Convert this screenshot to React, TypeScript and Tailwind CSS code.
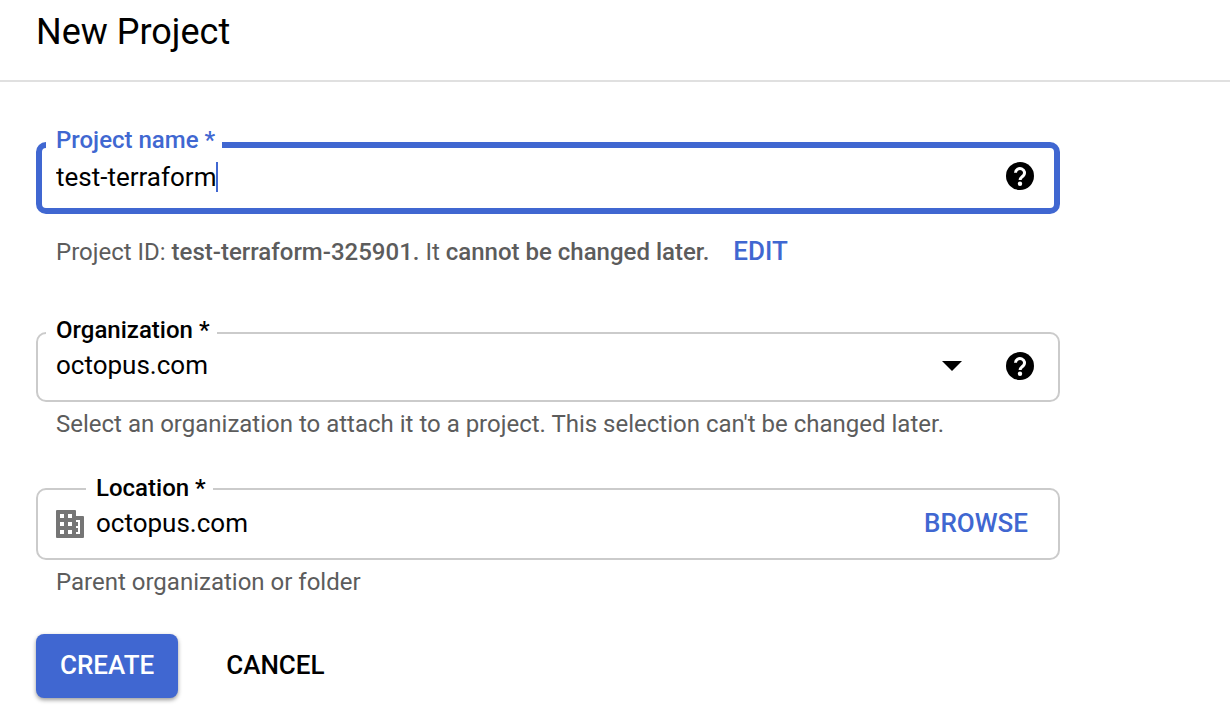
import type { ReactNode } from "react";

function HelpIcon() {
  return (
    <svg viewBox="0 0 28 28" className="size-7" aria-hidden="true">
      <circle cx="14" cy="14" r="14" fill="#000" />
      <path
        d="M9.5 10.8a4.5 4.3 0 1 1 7.7 3c-1.6 1.5-3.1 2.2-3.1 4.3"
        fill="none"
        stroke="#fff"
        strokeWidth="3"
      />
      <circle cx="14" cy="21.7" r="2.2" fill="#fff" />
    </svg>
  );
}

function HelpButton({ label }: { label: string }) {
  return (
    <button type="button" aria-label={label} className="shrink-0 pb-0.5">
      <HelpIcon />
    </button>
  );
}

function BuildingIcon() {
  return (
    <svg viewBox="0 0 28 28" className="size-7 shrink-0" fill="#757575" aria-hidden="true">
      <path
        fillRule="evenodd"
        d="M1 0h18a1 1 0 0 1 1 1v5h7a1 1 0 0 1 1 1v20a1 1 0 0 1-1 1H1a1 1 0 0 1-1-1V1a1 1 0 0 1 1-1zM4 4v4h4V4zM12 4v4h4V4zM4 12v4h4v-4zM12 12v4h4v-4zM4 20v4h4v-4zM12 20v4h4v-4zM20 10v2h2v4h-2v2h2v4h-2v2h4V10z"
      />
    </svg>
  );
}

function Field({
  id,
  label,
  hint,
  boxClass,
  labelClass,
  children,
}: {
  id: string;
  label: string;
  hint: ReactNode;
  boxClass: string;
  labelClass: string;
  children: ReactNode;
}) {
  return (
    <div>
      <div className={`relative flex items-center rounded-[10px] ${boxClass}`}>
        <label
          htmlFor={id}
          className={`absolute bg-white pr-[7px] pl-2.5 text-[24px] leading-7 font-medium ${labelClass}`}
        >
          {label}
        </label>
        {children}
      </div>
      {hint}
    </div>
  );
}

export default function App() {
  return (
    <div className="bg-white font-[Roboto,sans-serif] text-black">
      <header className="border-b-2 border-[#e0e0e0] px-9 pt-2.5 pb-[26px]">
        <h1 className="text-[36px] leading-11">New Project</h1>
      </header>

      <form
        className="max-w-[1096px] px-9 pt-15 pb-3"
        onSubmit={(event) => event.preventDefault()}
      >
        <Field
          id="project-name"
          label="Project name *"
          boxClass="h-18 border-6 border-[#4067d1] pr-5 pb-0.5 pl-3.5"
          labelClass="-top-[22px] left-1 text-[#4067d1]"
          hint={
            <p className="flex flex-wrap items-center gap-x-6 pt-5 pl-5 text-[24px] leading-9 text-[#5c5c5c]">
              <span>
                Project ID: <span className="font-medium">test-terraform-325901.</span> It{" "}
                <span className="font-medium">cannot be changed later.</span>
              </span>
              <button
                type="button"
                className="pb-0.5 text-[26px] leading-8 font-medium text-[#4067d1]"
              >
                EDIT
              </button>
            </p>
          }
        >
          <input
            id="project-name"
            type="text"
            defaultValue="test-terraform"
            className="field-sizing-content text-[26px] leading-8 caret-transparent outline-none"
          />
          <span className="h-[30px] w-0.5 bg-[#4067d1]" />
          <span className="grow" />
          <HelpButton label="Help for project name" />
        </Field>

        <div className="pt-[62px]">
          <Field
            id="organization"
            label="Organization *"
            boxClass="h-[70px] border-2 border-[#cbcbcb] pr-6 pl-[18px]"
            labelClass="-top-[18px] left-2"
            hint={
              <p className="pt-1 pl-5 text-[24px] leading-9 text-[#5c5c5c]">
                Select an organization to attach it to a project. This selection can't be
                changed later.
              </p>
            }
          >
            <select
              id="organization"
              className="grow appearance-none pb-1 text-[26px] leading-8 outline-none"
            >
              <option>octopus.com</option>
            </select>
            <svg viewBox="0 0 20 12" className="mr-11 h-3 w-5" aria-hidden="true">
              <path d="M0 0h20L10 10z" />
            </svg>
            <HelpButton label="Help for organization" />
          </Field>
        </div>

        <div className="pt-[46px]">
          <Field
            id="location"
            label="Location *"
            boxClass="h-18 gap-3 border-2 border-[#cbcbcb] pr-[30px] pl-[18px]"
            labelClass="-top-4 left-12"
            hint={
              <p className="pt-1 pl-5 text-[24px] leading-9 text-[#5c5c5c]">
                Parent organization or folder
              </p>
            }
          >
            <BuildingIcon />
            <input
              id="location"
              type="text"
              defaultValue="octopus.com"
              className="min-w-0 grow pb-0.5 text-[26px] leading-8 outline-none"
            />
            <button
              type="button"
              className="pb-0.5 text-[26px] leading-8 font-medium text-[#4067d1]"
            >
              BROWSE
            </button>
          </Field>
        </div>

        <div className="flex items-center gap-6 pt-[34px] text-[26px] leading-8 font-medium">
          <button
            type="submit"
            className="rounded-lg bg-[#4067d1] px-6 pt-[15px] pb-[17px] text-white shadow-[0_2px_4px_rgba(0,0,0,0.4)]"
          >
            CREATE
          </button>
          <button type="button" className="px-6 pt-[15px] pb-[17px]">
            CANCEL
          </button>
        </div>
      </form>
    </div>
  );
}
